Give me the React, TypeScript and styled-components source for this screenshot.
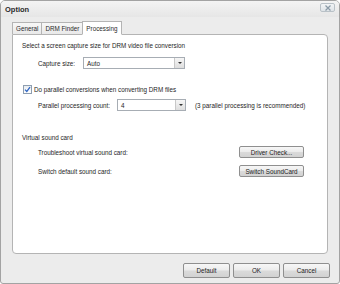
import React from 'react'
import styled, { createGlobalStyle } from 'styled-components'

const GlobalStyle = createGlobalStyle`
  html, body {
    margin: 0;
    padding: 0;
    background: #ffffff;
  }
  body {
    font-family: "Liberation Sans", Arial, sans-serif;
    font-size: 6.3px;
    color: #1e1e1e;
  }
`

type RowProps = {
  $top: number
  $height?: number
}

const App: React.FC = () => {
  return (
    <>
      <GlobalStyle />
      <Window>
        <TitleBar>
          <Title>Option</Title>
          <CloseButton>
            <svg width="6" height="6" viewBox="0 0 6 6">
              <path d="M0.5 0.5 L5.5 5.5 M5.5 0.5 L0.5 5.5" stroke="#8a9aa6" strokeWidth="1.2" />
            </svg>
          </CloseButton>
        </TitleBar>
        <Body>
          <Tabs>
            <Tab>General</Tab>
            <Tab>DRM Finder</Tab>
            <Tab $active>Processing</Tab>
          </Tabs>
          <Panel>
            <Row $top={5} $height={10}>Select a screen capture size for DRM video file conversion</Row>
            <IndentRow $top={7} $height={12}>
              <Label $width={45}>Capture size:</Label>
              <Select $width={102}>
                <span>Auto</span>
                <Arrow />
              </Select>
            </IndentRow>
            <Row $top={15} $height={10}>
              <Checkbox>
                <svg width="7" height="7" viewBox="0 0 7 7">
                  <path d="M1 3.6 L2.8 5.4 L6 1.2" stroke="#2f66c4" strokeWidth="1.3" fill="none" />
                </svg>
              </Checkbox>
              Do parallel conversions when converting DRM files
            </Row>
            <IndentRow $top={5} $height={12}>
              <Label $width={79}>Parallel processing count:</Label>
              <Select $width={69}>
                <span>4</span>
                <Arrow />
              </Select>
              <Note>(3 parallel processing is recommended)</Note>
            </IndentRow>
            <Row $top={21} $height={10}>Virtual sound card</Row>
            <IndentRow $top={4} $height={12}>
              <Label $width={201}>Troubleshoot virtual sound card:</Label>
              <Button $width={65}>Driver Check...</Button>
            </IndentRow>
            <IndentRow $top={7} $height={12}>
              <Label $width={201}>Switch default sound card:</Label>
              <Button $width={65}>Switch SoundCard</Button>
            </IndentRow>
          </Panel>
          <Footer>
            <Button $width={47} $height={15}>Default</Button>
            <Button $width={47} $height={15}>OK</Button>
            <Button $width={47} $height={15}>Cancel</Button>
          </Footer>
        </Body>
      </Window>
    </>
  )
}

const Window = styled.div`
  width: 340px;
  height: 284px;
  box-sizing: border-box;
  border: 1px solid #a3a3a3;
  border-radius: 5px 5px 3px 3px;
  background: #ececec;
  display: flex;
  flex-direction: column;
  overflow: hidden;
`

const TitleBar = styled.div`
  height: 16px;
  display: flex;
  align-items: center;
  padding: 0 4px 0 4px;
  background: linear-gradient(#f4f4f4, #e6e6e6);
`

const Title = styled.div`
  font-weight: bold;
  font-size: 7.5px;
  color: #2a2a2a;
`

const CloseButton = styled.div`
  margin-left: auto;
  width: 15px;
  height: 9px;
  box-sizing: border-box;
  border: 1px solid #b9c1c7;
  border-radius: 2px;
  background: linear-gradient(#f2f4f6, #dfe4e8);
  display: flex;
  align-items: center;
  justify-content: center;
  margin-top: -3px;
`

const Body = styled.div`
  flex: 1;
  display: flex;
  flex-direction: column;
  padding: 4px 10px 0 11px;
`

const Tabs = styled.div`
  display: flex;
  align-items: flex-end;
  height: 13px;
  position: relative;
  z-index: 1;
`

const Tab = styled.div<{ $active?: boolean }>`
  height: ${(p) => (p.$active ? 14 : 12)}px;
  box-sizing: border-box;
  padding: 0 3px;
  display: flex;
  align-items: center;
  border: 1px solid #b4b4b4;
  border-bottom: ${(p) => (p.$active ? '1px solid #ffffff' : 'none')};
  margin-left: -1px;
  margin-bottom: ${(p) => (p.$active ? -1 : 0)}px;
  background: ${(p) => (p.$active ? '#ffffff' : 'linear-gradient(#f7f7f7, #e9e9e9)')};
  color: #2a2a2a;

  &:first-child {
    margin-left: 0;
  }
`

const Panel = styled.div`
  width: 316px;
  height: 220px;
  box-sizing: border-box;
  background: #ffffff;
  border: 1px solid #b4b4b4;
  border-radius: 0 4px 4px 4px;
  padding: 0 9px;
  display: flex;
  flex-direction: column;
`

const Row = styled.div<RowProps>`
  display: flex;
  align-items: center;
  margin-top: ${(p) => p.$top}px;
  height: ${(p) => p.$height ?? 10}px;
  white-space: nowrap;
`

const IndentRow = styled(Row)`
  padding-left: 16px;
`

const Label = styled.div<{ $width: number }>`
  width: ${(p) => p.$width}px;
  flex-shrink: 0;
`

const Select = styled.div<{ $width: number }>`
  width: ${(p) => p.$width}px;
  height: 12px;
  box-sizing: border-box;
  border: 1px solid #a7adb4;
  background: #ffffff;
  display: flex;
  align-items: center;
  padding-left: 3px;

  span {
    flex: 1;
  }
`

const Arrow = styled.div`
  width: 9px;
  height: 10px;
  background: linear-gradient(#f6f6f6, #dedede);
  border-left: 1px solid #c8c8c8;
  position: relative;

  &::after {
    content: '';
    position: absolute;
    left: 3px;
    top: 4px;
    border-left: 2px solid transparent;
    border-right: 2px solid transparent;
    border-top: 2px solid #333;
  }
`

const Note = styled.div`
  margin-left: 9px;
`

const Checkbox = styled.div`
  width: 9px;
  height: 9px;
  box-sizing: border-box;
  border: 1px solid #8e9eb0;
  background: linear-gradient(#e8ecf0, #ffffff);
  display: flex;
  align-items: center;
  justify-content: center;
  margin: 0 2px 0 1px;
`

const Button = styled.div<{ $width: number; $height?: number }>`
  width: ${(p) => p.$width}px;
  height: ${(p) => p.$height ?? 12}px;
  box-sizing: border-box;
  border: 1px solid #8f8f8f;
  border-radius: 2px;
  background: linear-gradient(#f7f7f7 0%, #ececec 45%, #dadada 55%, #d2d2d2 100%);
  display: flex;
  align-items: center;
  justify-content: center;
  color: #222;
  flex-shrink: 0;
`

const Footer = styled.div`
  display: flex;
  justify-content: flex-end;
  gap: 3px;
  margin-top: 9px;
  width: 318px;
`

export default App
